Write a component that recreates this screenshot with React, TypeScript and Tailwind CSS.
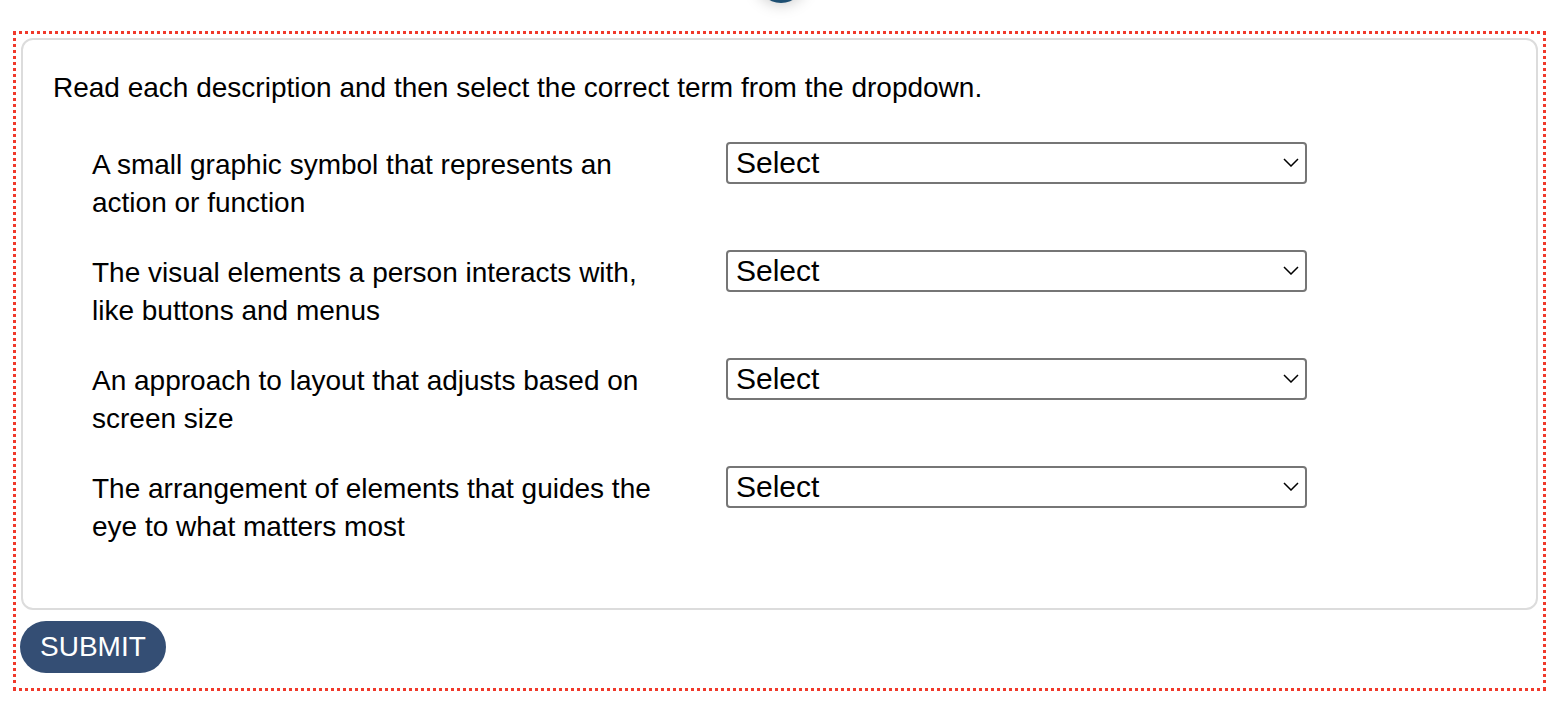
const items = [
  "A small graphic symbol that represents an action or function",
  "The visual elements a person interacts with, like buttons and menus",
  "An approach to layout that adjusts based on screen size",
  "The arrangement of elements that guides the eye to what matters most",
];

function TermSelect() {
  return (
    <div className="relative w-[581px] shrink-0">
      <select
        defaultValue=""
        className="h-[42px] w-full appearance-none rounded-[4px] border-2 border-[#767676] bg-white pl-[8px] pr-10 text-[30px] leading-none text-black outline-none"
      >
        <option value="">Select</option>
        <option value="icon">Icon</option>
        <option value="ui">User interface</option>
        <option value="responsive">Responsive design</option>
        <option value="hierarchy">Visual hierarchy</option>
      </select>
      <svg
        viewBox="0 0 16 9"
        className="pointer-events-none absolute right-[8px] top-[16px] h-[9px] w-[16px]"
        fill="none"
        stroke="black"
        strokeWidth={1.5}
      >
        <polyline points="1,1 8,8 15,1" />
      </svg>
    </div>
  );
}

export default function App() {
  return (
    <div className="relative min-h-[706px] bg-white pt-[31px] font-['Liberation_Sans',Arial,sans-serif] text-black">
      {/* scroll-to-top puck peeking in from above */}
      <div className="absolute left-[757px] top-[-45px] size-[48px] rounded-full bg-[#1e4f72] shadow-[0_0_16px_rgba(0,0,0,0.25)]" />

      <div className="mx-[13px] w-[1533px] border-[3px] border-dotted border-[#f0392b] px-[5px] pb-[15px] pt-[4px]">
        <div className="rounded-[12px] border-2 border-[#dcdcdc] px-[30px] pb-[62px] pt-[30px]">
          <p className="text-[28px] leading-[36px]">
            Read each description and then select the correct term from the dropdown.
          </p>
          <div className="mt-[36px] flex flex-col gap-[28px] pl-[39px]">
            {items.map((text) => (
              <div key={text} className="flex items-start">
                <p className="mr-[59px] w-[575px] pt-[4px] text-[28px] leading-[38px]">{text}</p>
                <TermSelect />
              </div>
            ))}
          </div>
        </div>
        <button
          type="button"
          className="-ml-px mt-[11px] h-[52px] rounded-full bg-[#344e74] px-[20px] text-[28px] text-white"
        >
          SUBMIT
        </button>
      </div>
    </div>
  );
}
